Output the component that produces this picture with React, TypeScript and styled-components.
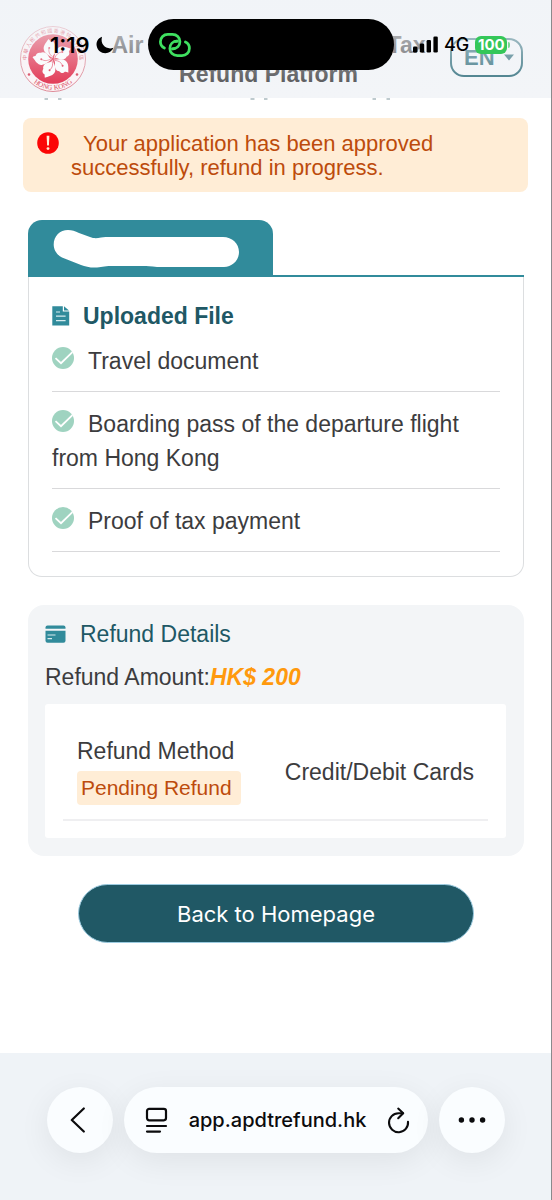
import React from "react";
import styled, { createGlobalStyle } from "styled-components";

const sans = `"Liberation Sans", "Noto Sans CJK TC", Arial, sans-serif`;
const system = `Inter, "Liberation Sans", sans-serif`;

const GlobalStyle = createGlobalStyle`
  *, *::before, *::after { box-sizing: border-box; }
  body { margin: 0; background: #ffffff; }
  button { font: inherit; color: inherit; padding: 0; border: 0; background: none; cursor: pointer; }
  svg { display: block; flex: none; }
`;

const Page = styled.div`
  min-height: 100vh;
  display: flex;
  flex-direction: column;
  background: #ffffff;
  border-right: 1px solid #8a8a8c;
  font-family: ${sans};
  font-size: 23px;
  color: #3c3c3e;
`;

const Header = styled.header`
  position: relative;
  display: flex;
  justify-content: space-between;
  height: 98px;
  padding: 25px 28px 0 19px;
  background: #f3f5f8;
`;

const Title = styled.h1`
  margin: 6px 0 0;
  font-size: 23px;
  line-height: 29px;
  font-weight: 700;
  text-align: center;
  color: #444446;
`;

const TitleLine = styled.span`
  display: block;
  white-space: nowrap;
`;

const LanguageButton = styled.button`
  display: flex;
  align-items: center;
  justify-content: space-between;
  width: 73px;
  height: 39px;
  margin-top: 13px;
  padding: 0 7px 0 12px;
  border: 2px solid #2b6a78;
  border-radius: 14px;
  color: #2b6a78;
  font-size: 22px;
  font-weight: 700;
`;

const StatusBar = styled.div`
  position: absolute;
  inset: 0;
  display: grid;
  grid-template-columns: 1fr 246px 1fr;
  align-items: start;
  padding: 19px 9px 0 0;
  background: linear-gradient(rgba(241, 244, 248, 0.92), rgba(243, 245, 248, 0));
  font-family: ${system};
  font-size: 22px;
  font-weight: 600;
  color: #000000;
  pointer-events: none;
`;

const StatusGroup = styled.div<{ $start: number }>`
  display: flex;
  align-items: center;
  gap: 6px;
  height: 51px;
  padding-left: ${(p) => p.$start}px;
`;

const Network = styled.span`
  font-size: 18px;
  font-weight: 500;
`;

const Battery = styled.span`
  position: relative;
  width: 32px;
  height: 18px;
  border-radius: 6px;
  background: #34c759;
  color: #ffffff;
  font-size: 15px;
  line-height: 18px;
  font-weight: 700;
  text-align: center;

  &::after {
    content: "";
    position: absolute;
    top: 6px;
    right: -3px;
    width: 2px;
    height: 6px;
    border-radius: 0 2px 2px 0;
    background: #7bd995;
  }
`;

const Island = styled.div`
  display: flex;
  align-items: center;
  height: 51px;
  padding-left: 10px;
  border-radius: 26px;
  background: #000000;
`;

const Main = styled.main`
  display: flex;
  flex-direction: column;
  padding-bottom: 48px;
`;

const Notice = styled.div`
  display: flex;
  gap: 12px;
  margin: 17px 23px 0;
  padding: 14px 12px 12px 14px;
  border-radius: 8px;
  background: #ffedd6;
  color: #bd4b0c;
`;

const NoticeText = styled.p`
  margin: 0;
  font-size: 22px;
  line-height: 24px;
  text-indent: 12px;
`;

const Application = styled.section`
  margin: 28px 27px 0 28px;
`;

const TabRow = styled.div`
  display: flex;
  border-bottom: 2px solid #318b9b;
`;

const Tab = styled.div`
  width: 245px;
  height: 55px;
  padding: 9px 0 0 25px;
  border-radius: 14px 14px 0 0;
  background: #318b9b;
`;

const FileCard = styled.div`
  padding: 22px 23px 24px;
  border: 1px solid #dcdee0;
  border-top: 0;
  border-radius: 0 0 14px 14px;
`;

const Heading = styled.h2<{ $bold?: boolean }>`
  display: flex;
  align-items: center;
  gap: ${(p) => (p.$bold ? 13 : 14)}px;
  margin: 0;
  font-size: 23px;
  line-height: 34px;
  font-weight: ${(p) => (p.$bold ? 700 : 400)};
  color: #205865;
`;

const FileList = styled.ul`
  margin: 0;
  padding: 0;
  list-style: none;
`;

const FileItem = styled.li`
  padding: 15px 0 13px;
  line-height: 34px;
  border-bottom: 1px solid #d9d9db;

  &:first-child { padding-top: 11px; }

  svg {
    display: inline-block;
    margin-right: 14px;
    vertical-align: 0;
  }
`;

const Refund = styled.section`
  margin: 28px 27px 0 28px;
  padding: 12px 18px 18px 17px;
  border-radius: 16px;
  background: #f3f5f7;
`;

const Amount = styled.p`
  margin: 9px 0 10px;
  line-height: 34px;
`;

const AmountValue = styled.em`
  font-weight: 700;
  color: #ff990d;
`;

const MethodBox = styled.div`
  padding: 30px 18px 17px;
  border-radius: 3px;
  background: #ffffff;
`;

const MethodRow = styled.dl`
  display: flex;
  align-items: center;
  justify-content: space-between;
  margin: 0;
  padding: 0 14px 14px;
  border-bottom: 2px solid #efeff1;
`;

const Method = styled.dt`
  display: flex;
  flex-direction: column;
  gap: 3px;
  line-height: 34px;
`;

const Badge = styled.span`
  padding: 0 9px 0 4px;
  border-radius: 4px;
  background: #ffedd6;
  color: #bd4b0c;
  font-size: 21px;
`;

const MethodValue = styled.dd`
  margin: 0;
  padding-top: 6px;
`;

const HomeButton = styled.button`
  height: 59px;
  margin: 28px 77px 0 78px;
  border: 1px solid #9ccbe0;
  border-radius: 30px;
  background: #205865;
  color: #ffffff;
  font-family: ${system};
  font-size: 22px;
`;

const BrowserBar = styled.footer`
  display: flex;
  align-items: flex-start;
  gap: 11px;
  height: 147px;
  margin-top: auto;
  padding: 34px 46px 0 47px;
  background: #eff3f7;
  font-family: ${system};
`;

const RoundButton = styled.button`
  display: grid;
  place-items: center;
  flex: none;
  width: 66px;
  height: 66px;
  border-radius: 50%;
  background: #fafdff;
  color: #0b0b0d;
  box-shadow: 0 8px 32px rgba(0, 0, 0, 0.07);
`;

const AddressPill = styled.div`
  flex: 1;
  display: flex;
  align-items: center;
  justify-content: space-between;
  height: 66px;
  padding: 0 18px 0 21px;
  border-radius: 33px;
  background: #fafdff;
  color: #0b0b0d;
  box-shadow: 0 8px 32px rgba(0, 0, 0, 0.07);
`;

const Address = styled.button`
  font-size: 20px;
  font-weight: 500;
`;

const petals = [0, 72, 144, 216, 288];

const Emblem = () => (
  <svg width="68" height="68" viewBox="-34 -34 68 68" role="img" aria-label="Hong Kong emblem">
    <defs>
      <path id="ring-top" d="M-22.8 13 A26.3 26.3 0 1 1 22.8 13" />
      <path id="ring-bottom" d="M-24 19 A30.6 30.6 0 0 0 24 19" />
    </defs>
    <circle r="32.5" fill="#fdf4f6" stroke="#dd8391" strokeWidth="1" />
    <circle r="24.8" fill="#e0203f" />
    <text fontSize="5" fill="#d5304a" fontFamily="Noto Sans CJK TC, sans-serif">
      <textPath href="#ring-top" startOffset="50%" textAnchor="middle">中 華 人 民 共 和 國 香 港 特 別 行 政 區</textPath>
    </text>
    <text fontSize="7" fill="#d5304a" fontFamily="Liberation Serif, serif">
      <textPath href="#ring-bottom" startOffset="50%" textAnchor="middle">HONG KONG</textPath>
    </text>
    <circle cx="-24" cy="15.5" r="1.3" fill="#d5304a" />
    <circle cx="24" cy="15.5" r="1.3" fill="#d5304a" />
    {petals.map((angle) => (
      <g key={angle} transform={`rotate(${angle - 10})`}>
        <path
          d="M0 -1 C-3 -4 -8 -7 -7.4 -12 C-6.6 -16 -3 -18 -1 -20.5 C0 -19.5 0 -18.5 1 -17.4 C4 -17.4 4.6 -15 4.4 -13 C6.4 -11 5.4 -7 2.4 -5 C1 -4 0 -3 0 -1Z"
          fill="#fff"
        />
        <path d="M0 -2 C-2.6 -5 -3.4 -8 -2 -11" fill="none" stroke="#e0203f" strokeWidth="0.6" />
        <circle cx="-1.8" cy="-11.6" r="1" fill="#e0203f" />
      </g>
    ))}
  </svg>
);

const CheckIcon = () => (
  <svg width="22" height="22" viewBox="0 0 22 22" aria-hidden="true">
    <circle cx="11" cy="11" r="11" fill="#9fd3c0" />
    <path d="M3.5 11.2 L9 16.2 L20.4 5.2" fill="none" stroke="#fff" strokeWidth="1.8" />
  </svg>
);

const files = [
  "Travel document",
  "Boarding pass of the departure flight from Hong Kong",
  "Proof of tax payment",
];

export default function App() {
  return (
    <>
      <GlobalStyle />
      <Page>
        <Header>
          <Emblem />
          <Title>
            <TitleLine>Air Passenger Departure Tax</TitleLine>
            <TitleLine>Refund Platform</TitleLine>
          </Title>
          <LanguageButton type="button">
            EN
            <svg width="10" height="7" viewBox="0 0 10 7" aria-hidden="true">
              <path d="M0 0.5H10L5 6.5Z" fill="currentColor" />
            </svg>
          </LanguageButton>
          <StatusBar>
            <StatusGroup $start={50}>
              <span>1:19</span>
              <svg width="18" height="18" viewBox="0 0 18 18" aria-hidden="true">
                <path d="M6 0.8 C1.8 2.5 0 6 0.7 10 C1.5 14.4 5 17.2 9.3 17.2 C13 17.2 16 15 17.4 11.8 C10.8 14.2 3.8 9 6 0.8Z" />
              </svg>
            </StatusGroup>
            <Island>
              <svg width="34" height="26" viewBox="0 0 34 26" fill="none" stroke="#3fe060" strokeWidth="2.8" strokeLinecap="round" aria-hidden="true">
                <path d="M6.4 16 C3.9 14.8 2.4 12.5 2.4 9.8 C2.4 5.4 5.6 2.4 9.8 2.4 H14.4 C18.8 2.4 21.9 5.5 21.9 9.6 C21.9 13.9 18.8 16.8 14.6 16.8" />
                <path d="M27.4 10 C30 11.2 31.4 13.5 31.4 16.2 C31.4 20.6 28.2 23.6 24 23.6 H19.4 C15 23.6 11.9 20.5 11.9 16.4 C11.9 12.1 15 9.2 19.2 9.2" />
                <path d="M19.2 9.2 L17.4 9.4 M14.6 16.8 L16.4 16.6" />
              </svg>
            </Island>
            <StatusGroup $start={19}>
              <svg width="25" height="17" viewBox="0 0 25 17" aria-hidden="true">
                <rect x="0" y="10.5" width="4.4" height="6" rx="1.3" />
                <rect x="6.8" y="7.5" width="4.4" height="9" rx="1.3" />
                <rect x="13.6" y="4" width="4.4" height="12.5" rx="1.3" />
                <rect x="20.4" y="0.5" width="4.4" height="16" rx="1.3" />
              </svg>
              <Network>4G</Network>
              <Battery>100</Battery>
            </StatusGroup>
          </StatusBar>
        </Header>

        <Main>
          <svg width="100%" height="3" aria-hidden="true">
            <path d="M44.5 1H48M58 1H61.5M250.5 1H254.5M264 1H267.5M372.5 1H376M386.5 1H390" stroke="#a9b9bf" strokeWidth="1.4" />
          </svg>
          <Notice role="status">
            <svg width="22" height="22" viewBox="0 0 22 22" aria-hidden="true">
              <circle cx="11" cy="11" r="10.8" fill="#fb0606" />
              <path d="M9.6 3.8 H12.4 L11.9 13.6 H10.1Z" fill="#ffedd6" />
              <circle cx="11" cy="16.6" r="1.4" fill="#ffedd6" />
            </svg>
            <NoticeText>
              Your application has been approved
              <br />
              successfully, refund in progress.
            </NoticeText>
          </Notice>

          <Application>
            <TabRow>
              <Tab>
                <svg width="187" height="40" viewBox="0 0 187 40" aria-hidden="true">
                  <path
                    d="M15 1 C19 1 22 2 26 4 L37 8 C41 9.6 44 9.4 48 8.4 C51 8 54 8 58 8 H170 C179 8 186 14.5 186 23 C186 31.5 179 38 171 38 H104 C98 37 94 37 90 37 H58 C51 37 48 38.6 42 38.6 C36 38.6 32 37.5 28 36 L9 28.5 C4 26 0.7 21 0.7 15.5 C0.7 7 7 1 15 1Z"
                    fill="#fff"
                  />
                </svg>
              </Tab>
            </TabRow>
            <FileCard>
              <Heading $bold>
                <svg width="18" height="20" viewBox="0 0 18 20" aria-hidden="true">
                  <path d="M0.3 0.3 H10.8 V5.4 H17.2 V19.5 H0.3Z" fill="#318b9b" />
                  <path d="M12 0.3 L17 4.4 H12Z" fill="#318b9b" />
                  <path d="M4 6H8M4 10.2H13.6M4 14.6H13.6" stroke="#d7ecef" strokeWidth="1.2" />
                </svg>
                Uploaded File
              </Heading>
              <FileList>
                {files.map((name) => (
                  <FileItem key={name}>
                    <CheckIcon />
                    {name}
                  </FileItem>
                ))}
              </FileList>
            </FileCard>
          </Application>

          <Refund>
            <Heading>
              <svg width="21" height="18" viewBox="0 0 21 18" aria-hidden="true">
                <path d="M0.5 3.8 V2.5 Q0.5 0.5 2.5 0.5 H18.5 Q20.5 0.5 20.5 2.5 V3.8Z" fill="#318b9b" />
                <path d="M0.5 5.8 H20.5 V15.8 Q20.5 17.8 18.5 17.8 H2.5 Q0.5 17.8 0.5 15.8Z" fill="#318b9b" />
                <path d="M2.5 10H10.5M2.5 13.6H7" stroke="#d7ecef" strokeWidth="1.1" />
              </svg>
              Refund Details
            </Heading>
            <Amount>
              Refund Amount:<AmountValue>HK$ 200</AmountValue>
            </Amount>
            <MethodBox>
              <MethodRow>
                <Method>
                  Refund Method
                  <Badge>Pending Refund</Badge>
                </Method>
                <MethodValue>Credit/Debit Cards</MethodValue>
              </MethodRow>
            </MethodBox>
          </Refund>

          <HomeButton type="button">Back to Homepage</HomeButton>
        </Main>

        <BrowserBar>
          <RoundButton type="button" aria-label="Back">
            <svg width="20" height="26" viewBox="0 0 20 26" fill="none" stroke="currentColor" strokeWidth="2.2" strokeLinecap="round" strokeLinejoin="round">
              <path d="M13.8 1.5 L1.8 13 L13.8 24.5" />
            </svg>
          </RoundButton>
          <AddressPill>
            <button type="button" aria-label="Page settings">
              <svg width="23" height="26" viewBox="0 0 23 26" fill="none" stroke="currentColor" strokeWidth="2.2" strokeLinecap="round">
                <rect x="2" y="1.8" width="19" height="11.5" rx="2.2" />
                <path d="M2 19H21M2 24.6H15" />
              </svg>
            </button>
            <Address type="button">app.apdtrefund.hk</Address>
            <button type="button" aria-label="Reload">
              <svg width="23" height="27" viewBox="0 0 23 27" fill="none" stroke="currentColor" strokeWidth="2.1" strokeLinecap="round" strokeLinejoin="round">
                <path d="M21 14.8 A9.5 9.5 0 1 1 11.5 6.2 H16" />
                <path d="M11.2 1.6 L16.2 6.2 L11.2 11.2" />
              </svg>
            </button>
          </AddressPill>
          <RoundButton type="button" aria-label="More">
            <svg width="28" height="6" viewBox="0 0 28 6" fill="currentColor">
              <circle cx="3.4" cy="3" r="2.7" />
              <circle cx="14" cy="3" r="2.7" />
              <circle cx="24.6" cy="3" r="2.7" />
            </svg>
          </RoundButton>
        </BrowserBar>
      </Page>
    </>
  );
}
